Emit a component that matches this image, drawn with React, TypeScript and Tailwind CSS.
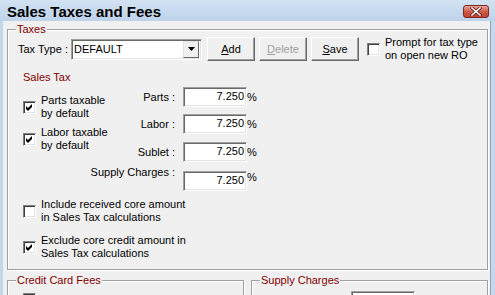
import React from "react";

const font = "font-['Liberation_Sans',Arial,sans-serif]";

function Check({ checked }: { checked?: boolean }) {
  return (
    <div className="w-[13px] h-[13px] shrink-0 bg-white border border-t-[#808080] border-l-[#808080] border-b-white border-r-white shadow-[inset_1px_1px_0_#404040,inset_-1px_-1px_0_#e3e3e3] flex items-center justify-center">
      {checked && (
        <svg width="9" height="9" viewBox="0 0 9 9" className="block">
          <polygon points="1,3 3,5 7,1 7,4 3,8 1,6" fill="#000" />
        </svg>
      )}
    </div>
  );
}

function CheckRow({ checked, lines, className = "" }: { checked?: boolean; lines: string[]; className?: string }) {
  return (
    <div className={`flex items-center gap-[5px] ${className}`}>
      <Check checked={checked} />
      <div className="whitespace-nowrap">
        {lines.map((l) => (
          <div key={l}>{l}</div>
        ))}
      </div>
    </div>
  );
}

function Button({ label, hot, disabled }: { label: string; hot: string; disabled?: boolean }) {
  const rest = label.slice(1);
  return (
    <div className="w-[48px] h-[24px] shrink-0 bg-[#f0f0f0] border border-t-white border-l-white border-b-[#696969] border-r-[#696969] shadow-[inset_-1px_-1px_0_#a0a0a0] flex items-center justify-center">
      <span className={disabled ? "text-[#a0a0a0]" : ""}>
        <span className="underline underline-offset-1">{hot}</span>
        {rest}
      </span>
    </div>
  );
}

function Field({ value }: { value?: string }) {
  return (
    <div className="w-[64px] h-[20px] shrink-0 bg-white border border-t-[#a0a0a0] border-l-[#a0a0a0] border-b-white border-r-white shadow-[inset_1px_1px_0_#696969,inset_-1px_-1px_0_#e3e3e3] flex items-center justify-end pr-[2px] pb-[2px]">
      {value}
    </div>
  );
}

function RateRow({ label, className = "", raised }: { label: string; className?: string; raised?: boolean }) {
  return (
    <div className={`flex ${raised ? "items-start" : "items-center"} h-[20px] ${className}`}>
      <div className={`w-[65px] flex justify-end whitespace-nowrap ${raised ? "-mt-[5px]" : ""}`}>{label}</div>
      <div className="ml-[8px]">
        <Field value="7.250" />
      </div>
      <span>%</span>
    </div>
  );
}

function GroupLabel({ text }: { text: string }) {
  return <span className="absolute left-[8px] -top-[7px] px-[1px] bg-[#f0f0f0] text-[#800000] whitespace-nowrap">{text}</span>;
}

const group = "relative border border-[#a0a0a0] shadow-[inset_1px_1px_0_#fff,1px_1px_0_#fff]";

export default function App() {
  return (
    <div className={`${font} text-[11px] leading-[13px] text-black w-[495px] h-[295px] overflow-hidden bg-[#c4d7ed] flex flex-col`}>
      {/* title bar */}
      <div className="h-[21px] shrink-0 flex items-center pl-[7px] pr-[6px] bg-gradient-to-b from-[#d3e2f3] to-[#bdd3eb]">
        <span className="text-[15px] leading-[17px] font-bold mt-[2px]">Sales Taxes and Fees</span>
        <div className="ml-auto mt-[1px] w-[26px] h-[13px] rounded-[3px] border border-[#7a2a22] bg-gradient-to-b from-[#e7a598] via-[#cf5a4c] to-[#c1402f] flex items-center justify-center">
          <svg width="12" height="9" viewBox="0 0 12 9" className="block">
            <path d="M2 1 L10 8 M10 1 L2 8" stroke="#5a1a14" strokeWidth="3" strokeLinecap="square" />
            <path d="M2 1 L10 8 M10 1 L2 8" stroke="#fff" strokeWidth="1.6" strokeLinecap="square" />
          </svg>
        </div>
      </div>

      {/* client area */}
      <div className="flex-1 ml-[3px] mr-[4px] bg-[#f0f0f0] border-r border-[#8fa3b8] pt-[8px] pl-[4px] pr-[2px]">
        <div className={`${group} h-[241px]`}>
          <GroupLabel text="Taxes" />

          <div className="flex items-center h-[24px] mt-[7px] pl-[10px]">
            <div className="w-[53px] whitespace-nowrap">Tax Type :</div>
            <div className="w-[131px] h-[21px] bg-white border border-t-[#a0a0a0] border-l-[#a0a0a0] border-b-white border-r-white shadow-[inset_1px_1px_0_#696969,inset_-1px_-1px_0_#e3e3e3] flex items-center pl-[2px] pr-[2px]">
              <span className="flex-1">DEFAULT</span>
              <div className="w-[16px] h-[17px] bg-[#f0f0f0] border border-t-[#e3e3e3] border-l-[#e3e3e3] border-b-[#696969] border-r-[#696969] flex items-center justify-center">
                <svg width="7" height="4" viewBox="0 0 7 4" className="block">
                  <polygon points="0,0 7,0 3.5,4" fill="#000" />
                </svg>
              </div>
            </div>
            <div className="ml-[5px] flex gap-[4px]">
              <Button label="Add" hot="A" />
              <Button label="Delete" hot="D" disabled />
              <Button label="Save" hot="S" />
            </div>
            <div className="ml-[8px]">
              <CheckRow lines={["Prompt for tax type", "on open new RO"]} />
            </div>
          </div>

          <div className="pl-[15px]">
            <div className="mt-[10px] text-[#800000]">Sales Tax</div>

            <div className="flex">
              <div className="w-[87px] shrink-0">
                <CheckRow checked lines={["Parts taxable", "by default"]} className="mt-[10px]" />
                <CheckRow checked lines={["Labor taxable", "by default"]} className="mt-[6px]" />
              </div>
              <div>
                <RateRow label="Parts :" className="mt-[3px]" />
                <RateRow label="Labor :" className="mt-[7px]" />
                <RateRow label="Sublet :" className="mt-[8px]" />
                <RateRow label="Supply Charges :" className="mt-[9px]" raised />
              </div>
            </div>

            <CheckRow lines={["Include received core amount", "in Sales Tax calculations"]} className="mt-[7px]" />
            <CheckRow checked lines={["Exclude core credit amount in", "Sales Tax calculations"]} className="mt-[10px]" />
          </div>
        </div>

        <div className="flex gap-[7px] mt-[10px]">
          <div className={`${group} w-[237px] h-[40px]`}>
            <GroupLabel text="Credit Card Fees" />
            <div className="ml-[15px] mt-[12px]">
              <Check />
            </div>
          </div>
          <div className={`${group} w-[237px] h-[40px]`}>
            <GroupLabel text="Supply Charges" />
            <div className="ml-[99px] mt-[10px]">
              <Field />
            </div>
          </div>
        </div>
      </div>
    </div>
  );
}
